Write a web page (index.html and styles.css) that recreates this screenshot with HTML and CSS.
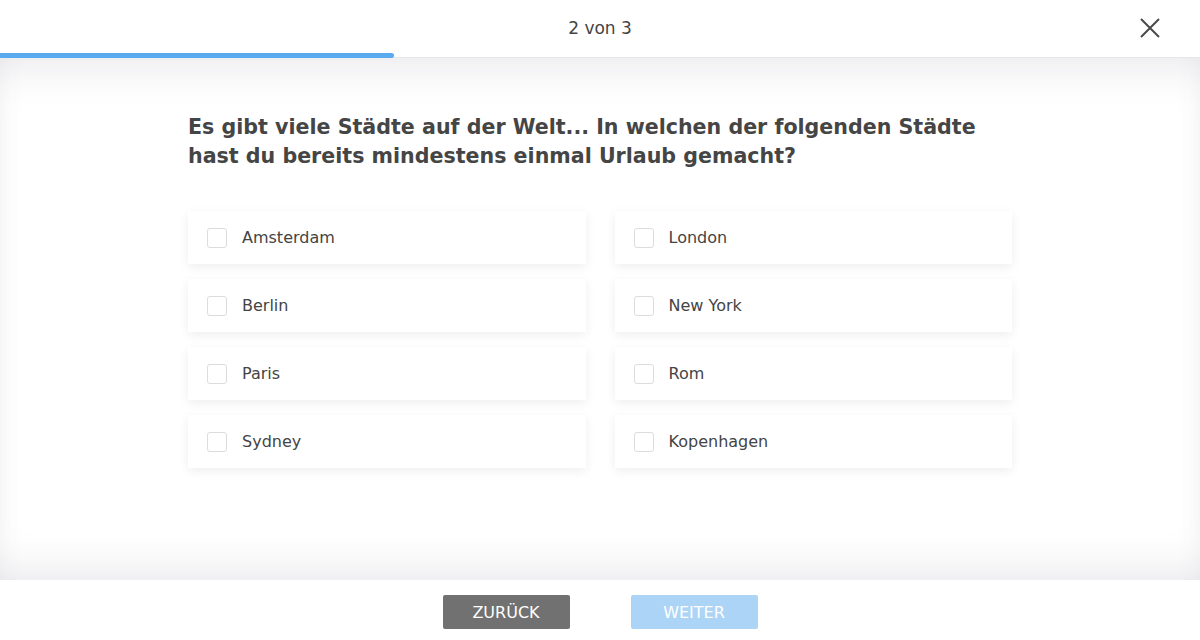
FILE: index.html
```html
<!DOCTYPE html>
<html lang="de">
	<head>
		<meta charset="UTF-8" />
		<meta name="viewport" content="width=device-width, initial-scale=1.0" />
		<title>Umfrage - Frage 2 von 3</title>
		<link rel="stylesheet" href="styles.css">
	</head>
	<body>
		<header class="topbar">
			<div class="step">2 von 3</div>
			<button class="close-btn" aria-label="Schließen">
				<svg width="22" height="22" viewBox="0 0 22 22">
					<path d="M2 2 L20 20 M20 2 L2 20" stroke="#4a4a4a" stroke-width="2" fill="none" />
				</svg>
			</button>
			<div class="progress">
				<div class="progress-fill" style="width: 32.8%"></div>
			</div>
		</header>

		<main class="content">
			<div class="question">
				<h1>
					Es gibt viele Städte auf der Welt... In welchen der folgenden Städte
					hast du bereits mindestens einmal Urlaub gemacht?
				</h1>

				<div class="options">
					<label class="option">
						<input type="checkbox" />
						<span class="box"></span>
						<span>Amsterdam</span>
					</label>
					<label class="option">
						<input type="checkbox" />
						<span class="box"></span>
						<span>London</span>
					</label>
					<label class="option">
						<input type="checkbox" />
						<span class="box"></span>
						<span>Berlin</span>
					</label>
					<label class="option">
						<input type="checkbox" />
						<span class="box"></span>
						<span>New York</span>
					</label>
					<label class="option">
						<input type="checkbox" />
						<span class="box"></span>
						<span>Paris</span>
					</label>
					<label class="option">
						<input type="checkbox" />
						<span class="box"></span>
						<span>Rom</span>
					</label>
					<label class="option">
						<input type="checkbox" />
						<span class="box"></span>
						<span>Sydney</span>
					</label>
					<label class="option">
						<input type="checkbox" />
						<span class="box"></span>
						<span>Kopenhagen</span>
					</label>
				</div>
			</div>
		</main>

		<footer class="actions">
			<button class="btn btn-back">Zurück</button>
			<button class="btn btn-next" disabled>Weiter</button>
		</footer>
	</body>
</html>
```

FILE: styles.css
```css
* {
	margin: 0;
	padding: 0;
	box-sizing: border-box;
}

body {
	font-family: 'DejaVu Sans', 'Open Sans', sans-serif;
	color: #464646;
	background: #fff;
	height: 100vh;
	display: flex;
	flex-direction: column;
	overflow: hidden;
}

.topbar {
	position: relative;
	height: 58px;
	background: #fff;
	display: flex;
	align-items: center;
	justify-content: center;
	border-bottom: 1px solid #e6e6ea;
	z-index: 2;
}

.step {
	font-size: 17px;
	font-weight: 500;
	color: #444;
	margin-top: -2px;
}

.close-btn {
	position: absolute;
	right: 39px;
	top: 17px;
	background: none;
	border: none;
	cursor: pointer;
	display: flex;
}

.progress {
	position: absolute;
	left: 0;
	right: 0;
	bottom: -1px;
	height: 5px;
}

.progress-fill {
	height: 100%;
	background: #5aaaf0;
	border-radius: 0 3px 3px 0;
}

.content {
	flex: 1;
	display: flex;
	justify-content: center;
	background: #fff;
	box-shadow: inset 0 28px 40px -18px rgba(40, 40, 70, 0.1),
		inset 0 -28px 40px -18px rgba(40, 40, 70, 0.1);
}

.question {
	width: 824px;
	padding-top: 55px;
}

h1 {
	max-width: 810px;
	font-size: 20.6px;
	font-weight: bold;
	line-height: 29px;
	color: #454545;
	margin-bottom: 40px;
}

.options {
	display: grid;
	grid-template-columns: 1fr 1fr;
	column-gap: 29px;
	row-gap: 15px;
}

.option {
	height: 53px;
	background: #fff;
	display: flex;
	align-items: center;
	padding-left: 19px;
	font-size: 16px;
	color: #444;
	box-shadow: 0 3px 10px rgba(0, 0, 0, 0.07);
	cursor: pointer;
}

.option input {
	display: none;
}

.box {
	width: 20px;
	height: 20px;
	border: 1.5px solid #dcdcdc;
	border-radius: 3px;
	margin-right: 15px;
}

.actions {
	height: 60px;
	padding-top: 4px;
	background: #fff;
	display: flex;
	align-items: center;
	justify-content: center;
	gap: 61px;
}

.btn {
	width: 127px;
	height: 34px;
	border: none;
	border-radius: 2px;
	color: #fff;
	font-family: inherit;
	font-size: 16px;
	text-transform: uppercase;
	cursor: pointer;
}

.btn-back {
	background: #717171;
}

.btn-next {
	background: #acd4f6;
	cursor: default;
}
```
